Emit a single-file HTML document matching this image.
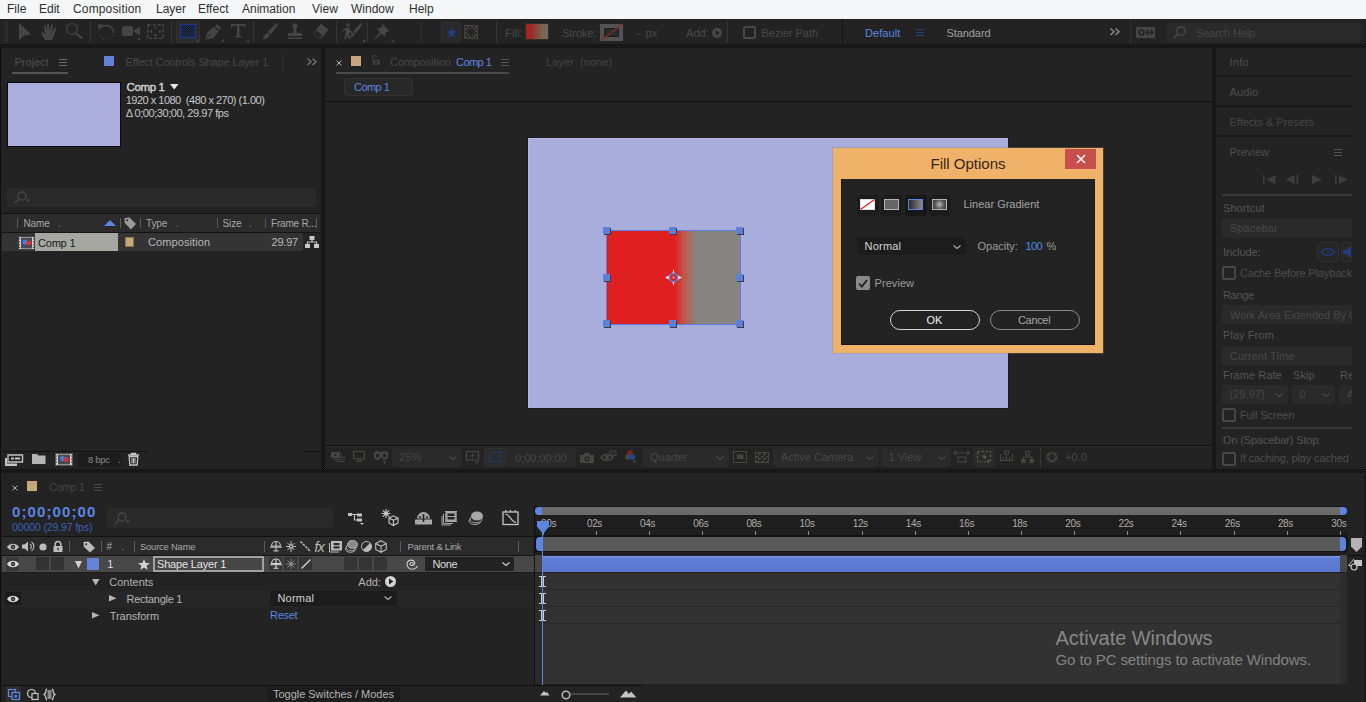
<!DOCTYPE html>
<html><head><meta charset="utf-8"><title>Adobe After Effects</title>
<style>
*{box-sizing:border-box;margin:0;padding:0}
html,body{width:1366px;height:702px;overflow:hidden;background:#232323;font-family:"Liberation Sans",sans-serif;font-size:11px;color:#8a8a8a}
.a{position:absolute}
.t{position:absolute;white-space:nowrap;line-height:14px}
svg{overflow:visible}
</style></head><body>
<!-- MENU BAR -->
<div class="a" style="left:0px;top:0px;width:1366px;height:19px;background:#f5f6f7;"></div>
<span class="t" style="left:7px;top:2.04px;font-size:12.01px;color:#2e2e2e;">File</span>
<span class="t" style="left:39px;top:2.04px;font-size:12.01px;color:#2e2e2e;">Edit</span>
<span class="t" style="left:73px;top:2.04px;font-size:12.01px;color:#2e2e2e;letter-spacing:0.15px;">Composition</span>
<span class="t" style="left:156px;top:2.04px;font-size:12.01px;color:#2e2e2e;">Layer</span>
<span class="t" style="left:198px;top:2.04px;font-size:12.01px;color:#2e2e2e;">Effect</span>
<span class="t" style="left:242px;top:2.04px;font-size:12.01px;color:#2e2e2e;">Animation</span>
<span class="t" style="left:312px;top:2.04px;font-size:12.01px;color:#2e2e2e;">View</span>
<span class="t" style="left:351px;top:2.04px;font-size:12.01px;color:#2e2e2e;">Window</span>
<span class="t" style="left:409px;top:2.04px;font-size:12.01px;color:#2e2e2e;">Help</span>
<!-- TOOLBAR -->
<svg class="a" style="left:5px;top:22px;" width="4" height="19" viewBox="0 0 4 19"><rect x="0" y="0" width="3" height="1" fill="#333"/><rect x="0" y="2" width="3" height="1" fill="#333"/><rect x="0" y="4" width="3" height="1" fill="#333"/><rect x="0" y="6" width="3" height="1" fill="#333"/><rect x="0" y="8" width="3" height="1" fill="#333"/><rect x="0" y="10" width="3" height="1" fill="#333"/><rect x="0" y="12" width="3" height="1" fill="#333"/><rect x="0" y="14" width="3" height="1" fill="#333"/><rect x="0" y="16" width="3" height="1" fill="#333"/><rect x="0" y="18" width="3" height="1" fill="#333"/></svg>
<svg class="a" style="left:19px;top:23px;" width="13" height="18" viewBox="0 0 13 18"><path d="M0 0 L12 11.5 L5.3 12.4 L0 17 Z" fill="#454545"/></svg>
<svg class="a" style="left:41px;top:23px;" width="16" height="17" viewBox="0 0 16 17"><path d="M4 17 C2 13 0 11 0.5 9.5 C1.5 8.5 3 10 4 11 L3 3 C3 1.5 5 1.5 5 3 L6 8 L6 1.5 C6 0 8 0 8 1.5 L8.5 8 L10 2 C10.3 0.8 12 1 11.8 2.5 L11 9 L13.5 5 C14.2 4 15.5 4.8 15 6 C13.5 10 13 14 11 17 Z" fill="#454545"/></svg>
<svg class="a" style="left:66px;top:23px;" width="17" height="17" viewBox="0 0 17 17"><circle cx="6" cy="6" r="5.4" fill="none" stroke="#454545" stroke-width="1.2"/><path d="M10 10.3 L16 15.6" stroke="#454545" stroke-width="2"/></svg>
<div class="a" style="left:90px;top:21px;width:1px;height:21px;background:#363636;"></div>
<svg class="a" style="left:98px;top:23px;" width="17" height="17" viewBox="0 0 17 17"><path d="M3.5 4.5 A7.2 7.2 0 0 1 15.6 10" fill="none" stroke="#454545" stroke-width="1.5"/><path d="M0 1 L5.5 2 L1 7 Z" fill="#454545"/><path d="M14.5 12.5 A7.2 7.2 0 0 1 1.5 11" fill="none" stroke="#454545" stroke-width="1.2" stroke-dasharray="1.2 2"/></svg>
<svg class="a" style="left:122px;top:25px;" width="19" height="16" viewBox="0 0 19 16"><rect x="0" y="1" width="11" height="10" rx="2.5" fill="#454545"/><path d="M11 6 L18 1.5 L18 10.5 Z" fill="#454545"/><path d="M15 15 L18 15 L18 12 Z" fill="#454545"/></svg>
<svg class="a" style="left:147px;top:24px;" width="17" height="15" viewBox="0 0 17 15"><rect x="0.75" y="0.75" width="15.5" height="13.5" fill="none" stroke="#454545" stroke-width="1.5" stroke-dasharray="3 2"/><path d="M8.5 2 L10.5 4.5 L6.5 4.5 Z M8.5 13 L10.5 10.5 L6.5 10.5 Z M2.5 7.5 L5 5.5 L5 9.5 Z M14.5 7.5 L12 5.5 L12 9.5 Z" fill="#454545"/></svg>
<div class="a" style="left:171px;top:21px;width:1px;height:21px;background:#363636;"></div>
<div class="a" style="left:176px;top:21px;width:24px;height:22px;background:#2b2b2b;border-radius:3px;border:1px solid #303030"></div>
<div class="a" style="left:180px;top:24px;width:16px;height:14px;background:repeating-conic-gradient(#1a2c62 0 25%,#1b1b1d 0 50%) 0 0/2px 2px;border:1px solid #1c3a96"></div>
<svg class="a" style="left:196px;top:39px;" width="3" height="3" viewBox="0 0 3 3"><path d="M0 3 L3 3 L3 0 Z" fill="#454545"/></svg>
<svg class="a" style="left:205px;top:24px;" width="17" height="17" viewBox="0 0 17 17"><path d="M0 16 L2.5 8 L9 3 L13.5 7.5 L8.5 14 Z" fill="#454545"/><path d="M10 2 L12 0 L16 4 L14 6 Z" fill="#454545"/><path d="M0.5 15.5 L6 10" stroke="#232323" stroke-width="1"/></svg>
<svg class="a" style="left:221px;top:39px;" width="3" height="3" viewBox="0 0 3 3"><path d="M0 3 L3 3 L3 0 Z" fill="#454545"/></svg>
<svg class="a" style="left:231px;top:24px;" width="15" height="15" viewBox="0 0 15 15"><path d="M0 0 H14.5 V3.5 H13 V2 H8.5 V12 H10.5 V13.5 H4 V12 H6 V2 H1.5 V3.5 H0 Z" fill="#454545"/></svg>
<svg class="a" style="left:246px;top:39px;" width="3" height="3" viewBox="0 0 3 3"><path d="M0 3 L3 3 L3 0 Z" fill="#454545"/></svg>
<div class="a" style="left:253px;top:21px;width:1px;height:21px;background:#363636;"></div>
<svg class="a" style="left:262px;top:23px;" width="17" height="17" viewBox="0 0 17 17"><path d="M16 0 C17 1 12 8 8.5 11.5 L6 9 C9 5 15 -0.5 16 0 Z" fill="#454545"/><path d="M5.3 9.8 L7.8 12.2 C7 15 3 17 0 16 C2 15 2.5 11 5.3 9.8 Z" fill="#454545"/></svg>
<svg class="a" style="left:287px;top:23px;" width="16" height="17" viewBox="0 0 16 17"><circle cx="8" cy="3" r="2.6" fill="#454545"/><path d="M7 5 H9 L9.8 10 H15 V13 H1 V10 H6.2 Z" fill="#454545"/><rect x="1" y="14.5" width="14" height="1.4" fill="#454545"/></svg>
<svg class="a" style="left:312px;top:23px;" width="17" height="17" viewBox="0 0 17 17"><path d="M9 0.5 L16.5 7 L9.5 15 L7 16 L1 10.5 Z" fill="#454545"/><path d="M1.6 10.4 L4.4 7.2 L10 12.2 L7.2 15.4 Z" fill="#232323"/></svg>
<div class="a" style="left:336px;top:21px;width:1px;height:21px;background:#363636;"></div>
<svg class="a" style="left:342px;top:23px;" width="21" height="18" viewBox="0 0 21 18"><circle cx="6" cy="2" r="1.8" fill="#454545"/><path d="M3 5 L7 4.5 L8.5 8 L11 9 L10.5 10 L7.5 9.5 L7 12 L9 16 L7.7 16.5 L5 12.5 L3.5 16.5 L2 16 L4 9 L3.5 6.5 L1.5 9 L0.5 8.5 Z" fill="#454545"/><path d="M20 0 C21 1 16 8 13.5 10.5 L11.5 8.5 C14 5 19 -0.5 20 0 Z M11 9.5 L12.8 11.2 C12 13.5 9.5 14.5 8 14 C9.3 13 9.2 10.3 11 9.5 Z" fill="#454545"/></svg>
<svg class="a" style="left:362px;top:39px;" width="3" height="3" viewBox="0 0 3 3"><path d="M0 3 L3 3 L3 0 Z" fill="#454545"/></svg>
<div class="a" style="left:367px;top:21px;width:1px;height:21px;background:#363636;"></div>
<svg class="a" style="left:374px;top:23px;" width="16" height="17" viewBox="0 0 16 17"><path d="M8 0.5 L15.5 8 L13.5 8.5 L11 11 L11 14 L7.5 10.5 L1 16.5 L0.5 16 L6 9 L2.5 5.5 L5.5 5.5 L8 3 Z" fill="#454545"/></svg>
<svg class="a" style="left:391px;top:39px;" width="3" height="3" viewBox="0 0 3 3"><path d="M0 3 L3 3 L3 0 Z" fill="#454545"/></svg>
<div class="a" style="left:421px;top:21px;width:1px;height:21px;background:#303030;"></div>
<div class="a" style="left:441px;top:22px;width:20px;height:20px;background:#292929;border-radius:3px;border:1px solid #2f2f2f"></div>
<svg class="a" style="left:446px;top:26.5px;" width="11" height="10.5" viewBox="0 0 12 11.6"><path d="M6 0 L7.6 4.2 L12 4.4 L8.5 7.2 L9.7 11.6 L6 9.1 L2.3 11.6 L3.5 7.2 L0 4.4 L4.4 4.2 Z" fill="#223c86"/></svg>
<div class="a" style="left:464px;top:25px;width:14px;height:14px;background:repeating-conic-gradient(#45423c 0 25%,#262626 0 50%) 0 0/4px 4px;border:1px solid #45423c"></div>
<div class="a" style="left:468px;top:29px;width:6px;height:6px;background:#242424;transform:rotate(45deg)"></div>
<div class="a" style="left:496px;top:22px;width:1px;height:20px;background:#363636;"></div>
<span class="t" style="left:505px;top:26.39px;font-size:11px;color:#4a4a4a;letter-spacing:0.16999999999999998px;">Fill:</span>
<div class="a" style="left:525px;top:23px;width:24px;height:17px;background:linear-gradient(90deg,#a42222 0%,#96302a 30%,#865040 55%,#7c6650 75%,#736a60 100%);border:1px solid #2e2e2e"></div>
<span class="t" style="left:562px;top:26.39px;font-size:11px;color:#4a4a4a;letter-spacing:-0.030000000000000027px;">Stroke:</span>
<div class="a" style="left:600px;top:24px;width:23px;height:17px;background:#2a2a2a;border:4px solid #525252;box-shadow:inset 0 0 0 1px #1e1e1e"></div>
<svg class="a" style="left:600px;top:24px;" width="23" height="17" viewBox="0 0 23 17"><path d="M0 17 L23 0" stroke="#8c2c26" stroke-width="1.3"/></svg>
<span class="t" style="left:636.5px;top:26.39px;font-size:11px;color:#4a4a4a;letter-spacing:0.47px;">-</span>
<span class="t" style="left:645.5px;top:26.39px;font-size:11px;color:#4a4a4a;letter-spacing:0.06999999999999995px;">px</span>
<span class="t" style="left:686px;top:26.39px;font-size:11px;color:#4a4a4a;letter-spacing:0.06999999999999995px;">Add:</span>
<svg class="a" style="left:712px;top:28px;" width="10" height="10" viewBox="0 0 10 10"><circle cx="5" cy="5" r="5" fill="#484848"/><path d="M3.6 2.2 L7.8 5 L3.6 7.8 Z" fill="#232323"/></svg>
<div class="a" style="left:727px;top:22px;width:1px;height:20px;background:#363636;"></div>
<div class="a" style="left:743px;top:26px;width:13px;height:13px;background:transparent;border:2px solid #474747;border-radius:2px"></div>
<span class="t" style="left:761.5px;top:26.39px;font-size:11px;color:#4a4a4a;letter-spacing:-0.030000000000000027px;">Bezier Path</span>
<div class="a" style="left:842px;top:19px;width:1px;height:25px;background:#141414;"></div>
<span class="t" style="left:865px;top:26.39px;font-size:11px;color:#5b85e0;letter-spacing:0.06999999999999995px;">Default</span>
<svg class="a" style="left:916px;top:29px;" width="9" height="8" viewBox="0 0 9 8"><path d="M0 0.5 H8 M0 3.5 H8 M0 6.5 H8" stroke="#27417d" stroke-width="1"/></svg>
<span class="t" style="left:946.5px;top:26.39px;font-size:11px;color:#a0a0a0;letter-spacing:-0.08000000000000007px;">Standard</span>
<svg class="a" style="left:1110px;top:28px;" width="11" height="8" viewBox="0 0 11 8"><path d="M0.5 0.5 L4 3.8 L0.5 7 M5.5 0.5 L9 3.8 L5.5 7" fill="none" stroke="#8a8a8a" stroke-width="1.5"/></svg>
<div class="a" style="left:1130px;top:20px;width:1px;height:24px;background:#303030;"></div>
<svg class="a" style="left:1136px;top:27px;" width="19" height="11" viewBox="0 0 19 11"><rect x="0" y="0" width="19" height="11" fill="#454545"/><circle cx="5.5" cy="5.5" r="2.4" fill="none" stroke="#232323" stroke-width="1.5"/><path d="M10 5.5 H17 M14.5 3 L17 5.5 L14.5 8 M12.5 3 L10 5.5 L12.5 8" fill="none" stroke="#232323" stroke-width="1.3"/></svg>
<div class="a" style="left:1167px;top:23px;width:194px;height:19px;background:#2a2a2a;border-radius:3px"></div>
<svg class="a" style="left:1173px;top:26px;" width="13" height="13" viewBox="0 0 13 13"><circle cx="8" cy="5" r="4.2" fill="none" stroke="#4a4a4a" stroke-width="1.3"/><path d="M5 8 L0.8 12.2" stroke="#4a4a4a" stroke-width="1.6"/></svg>
<span class="t" style="left:1196px;top:26.39px;font-size:11px;color:#474747;letter-spacing:-0.13px;">Search Help</span>
<!-- DIVIDERS -->
<div class="a" style="left:0px;top:44px;width:1366px;height:4px;background:repeating-conic-gradient(#0c0c0c 0 25%,#232323 0 50%) 0 0/2px 2px"></div>
<div class="a" style="left:321px;top:48px;width:4px;height:421px;background:repeating-conic-gradient(#0c0c0c 0 25%,#232323 0 50%) 0 0/2px 2px"></div>
<div class="a" style="left:1212px;top:48px;width:4px;height:421px;background:repeating-conic-gradient(#0c0c0c 0 25%,#232323 0 50%) 0 0/2px 2px"></div>
<div class="a" style="left:0px;top:469px;width:1366px;height:4px;background:repeating-conic-gradient(#0c0c0c 0 25%,#232323 0 50%) 0 0/2px 2px"></div>
<div class="a" style="left:0px;top:48px;width:1px;height:654px;background:#0e0e0e;"></div>
<!-- PROJECT PANEL -->
<span class="t" style="left:14.5px;top:54.89px;font-size:11px;color:#4f4f4f;letter-spacing:-0.030000000000000027px;">Project</span>
<svg class="a" style="left:59px;top:59px;" width="9" height="8" viewBox="0 0 9 8"><path d="M0 0.5 H8 M0 3.5 H8 M0 6.5 H8" stroke="#6a6a6a" stroke-width="1"/></svg>
<div class="a" style="left:12px;top:72px;width:56px;height:2px;background:#565656;"></div>
<div class="a" style="left:104px;top:56px;width:10px;height:10px;background:#6380d8;"></div>
<span class="t" style="left:125.5px;top:54.89px;font-size:11px;color:#474747;letter-spacing:-0.13px;">Effect Controls Shape Layer 1</span>
<div class="a" style="left:282px;top:52px;width:1px;height:20px;background:#2e2e2e;"></div>
<svg class="a" style="left:307px;top:58px;" width="11" height="8" viewBox="0 0 11 8"><path d="M0.5 0.5 L4 3.8 L0.5 7 M5.5 0.5 L9 3.8 L5.5 7" fill="none" stroke="#6e6e6e" stroke-width="1.5"/></svg>
<div class="a" style="left:7px;top:82px;width:114px;height:65px;background:#abaedd;border:1px solid #0a0a0a"></div>
<span class="t" style="left:126.5px;top:80.22px;font-size:11.5px;color:#d4d4d4;letter-spacing:-0.35px;-webkit-text-stroke:0.4px #d4d4d4;">Comp 1</span>
<svg class="a" style="left:170px;top:84px;" width="9" height="6" viewBox="0 0 9 6"><path d="M0 0 L8.5 0 L4.25 5.5 Z" fill="#e8e8e8"/></svg>
<span class="t" style="left:125.7px;top:93.49px;font-size:11px;color:#c8c8c8;letter-spacing:-0.5px;">1920 x 1080&nbsp; (480 x 270) (1.00)</span>
<span class="t" style="left:125.7px;top:106.49px;font-size:11px;color:#c8c8c8;letter-spacing:-0.45px;">&#916; 0;00;30;00, 29.97 fps</span>
<div class="a" style="left:7px;top:188px;width:309px;height:19px;background:#2a2a2a;border-radius:3px"></div>
<svg class="a" style="left:14px;top:191px;" width="18" height="14" viewBox="0 0 18 14"><circle cx="8" cy="5" r="4" fill="none" stroke="#484848" stroke-width="1.3"/><path d="M5 8 L1 12" stroke="#484848" stroke-width="1.5"/><path d="M11.5 8.5 L16 8.5 L13.75 11 Z" fill="#484848"/></svg>
<div class="a" style="left:2px;top:213px;width:318px;height:1px;background:#111;"></div>
<div class="a" style="left:2px;top:214px;width:318px;height:18px;background:#2b2b2b;"></div>
<div class="a" style="left:2px;top:232px;width:318px;height:1px;background:#151515;"></div>
<div class="a" style="left:17px;top:218px;width:1px;height:10px;background:#5a5a5a;"></div>
<div class="a" style="left:120px;top:218px;width:1px;height:10px;background:#5a5a5a;"></div>
<div class="a" style="left:140px;top:218px;width:1px;height:10px;background:#5a5a5a;"></div>
<div class="a" style="left:217px;top:218px;width:1px;height:10px;background:#5a5a5a;"></div>
<div class="a" style="left:265px;top:218px;width:1px;height:10px;background:#5a5a5a;"></div>
<div class="a" style="left:316px;top:218px;width:1px;height:10px;background:#5a5a5a;"></div>
<span class="t" style="left:23.5px;top:216.73px;font-size:10px;color:#a8a8a8;letter-spacing:-0.1px;">Name</span>
<span class="t" style="left:58px;top:216.73px;font-size:10px;color:#5b85e0;">.</span>
<svg class="a" style="left:104px;top:220px;" width="13" height="6" viewBox="0 0 13 6"><path d="M0 6 L6 0 L12 6 Z" fill="#5b85e0"/></svg>
<svg class="a" style="left:124px;top:217px;" width="13" height="13" viewBox="0 0 13 13"><path d="M0.5 1 L5.5 0.5 L12 7 L7 12.5 L0.8 6 Z" fill="#9a9a9a"/><circle cx="3.2" cy="3.2" r="1" fill="#2b2b2b"/></svg>
<span class="t" style="left:146px;top:216.73px;font-size:10px;color:#a8a8a8;letter-spacing:-0.1px;">Type</span>
<span class="t" style="left:176px;top:216.73px;font-size:10px;color:#5b85e0;">.</span>
<span class="t" style="left:222.5px;top:216.73px;font-size:10px;color:#a8a8a8;letter-spacing:-0.1px;">Size</span>
<span class="t" style="left:249px;top:216.73px;font-size:10px;color:#5b85e0;">.</span>
<span class="t" style="left:271px;top:216.73px;font-size:10px;color:#a8a8a8;letter-spacing:-0.2px;">Frame R...</span>
<div class="a" style="left:2px;top:233px;width:301px;height:18px;background:#343434;"></div>
<div class="a" style="left:35px;top:233px;width:83px;height:18px;background:#a5a7a0;"></div>
<svg class="a" style="left:18px;top:236px;" width="17" height="14" viewBox="0 0 17 14"><rect x="0.5" y="0.5" width="16" height="13" fill="#cfcfcf" stroke="#444" stroke-width="1"/><rect x="3" y="1.5" width="11" height="11" fill="#4a4a55"/><circle cx="7" cy="6" r="2.6" fill="#4a7ad8"/><rect x="8.5" y="5" width="4.5" height="4" fill="#e03030"/><path d="M1.5 2.5 v1 M1.5 5.5 v1 M1.5 8.5 v1 M1.5 11 v1 M15.5 2.5 v1 M15.5 5.5 v1 M15.5 8.5 v1 M15.5 11 v1" stroke="#333" stroke-width="1"/></svg>
<span class="t" style="left:38px;top:235.59px;font-size:11.01px;color:#1a1a1a;letter-spacing:-0.2px;">Comp 1</span>
<div class="a" style="left:125px;top:237px;width:9px;height:10px;background:#c9a77c;border:1px solid #8d7552"></div>
<span class="t" style="left:148px;top:235.49px;font-size:11px;color:#b8b8b8;letter-spacing:0.1px;">Composition</span>
<span class="t" style="left:271.5px;top:234.69px;font-size:11px;color:#b8b8b8;letter-spacing:-0.2px;">29.97</span>
<svg class="a" style="left:305px;top:236px;" width="14" height="12" viewBox="0 0 14 12"><rect x="4.5" y="0" width="5" height="4" fill="#c8c8c8"/><rect x="0" y="8" width="5" height="4" fill="#c8c8c8"/><rect x="9" y="8" width="5" height="4" fill="#c8c8c8"/><path d="M7 4 V6 M2.5 8 V6 H11.5 V8" fill="none" stroke="#c8c8c8" stroke-width="1.2"/></svg>
<div class="a" style="left:2px;top:451px;width:145px;height:1px;background:#111;"></div>
<div class="a" style="left:303px;top:451px;width:18px;height:1px;background:#111;"></div>
<svg class="a" style="left:5px;top:454px;" width="18" height="12" viewBox="0 0 18 12"><path d="M3 1 H17.5 V8 H3 Z" fill="none" stroke="#c4c4c4" stroke-width="1.4"/><rect x="6" y="3.5" width="3" height="2" fill="#c4c4c4"/><rect x="10" y="3.5" width="5" height="2" fill="#c4c4c4"/><path d="M0 4 H2 V9.5 H12 V12 H0 Z" fill="#c4c4c4"/></svg>
<svg class="a" style="left:32px;top:454px;" width="14" height="10" viewBox="0 0 14 10"><path d="M0 0 H5 L6.5 1.5 H13.5 V10 H0 Z" fill="#b4b4b4"/></svg>
<svg class="a" style="left:55px;top:453px;" width="18" height="13" viewBox="0 0 18 13"><rect x="0.5" y="0.5" width="17" height="12" fill="#d0d0d0" stroke="#555" stroke-width="1"/><rect x="3" y="1.5" width="12" height="10" fill="#4a4a55"/><circle cx="7.5" cy="5.5" r="2.5" fill="#4a7ad8"/><rect x="9" y="4.5" width="4.5" height="4" fill="#e03030"/><path d="M1.5 2.5 v1 M1.5 5.5 v1 M1.5 8.5 v1 M16.5 2.5 v1 M16.5 5.5 v1 M16.5 8.5 v1" stroke="#333" stroke-width="1"/></svg>
<div class="a" style="left:78px;top:453px;width:44px;height:14px;background:repeating-conic-gradient(#161616 0 25%,#222 0 50%) 0 0/2px 2px;border-radius:3px"></div>
<span class="t" style="left:88px;top:452.91px;font-size:9.5px;color:#8a8a8a;letter-spacing:-0.3px;">8 bpc</span>
<span class="t" style="left:118px;top:452.84px;font-size:10px;color:#5b85e0;">.</span>
<svg class="a" style="left:128px;top:453px;" width="11" height="12" viewBox="0 0 11 12"><path d="M0 2 H11 M3.5 2 V0.5 H7.5 V2" fill="none" stroke="#c4c4c4" stroke-width="1.3"/><path d="M1.2 3.5 H9.8 L9.2 12 H1.8 Z" fill="none" stroke="#c4c4c4" stroke-width="1.3"/><path d="M4 5 V10.5 M5.5 5 V10.5 M7 5 V10.5" stroke="#c4c4c4" stroke-width="1"/></svg>
<!-- COMPOSITION PANEL -->
<svg class="a" style="left:336px;top:60px;" width="6" height="6" viewBox="0 0 6 6"><path d="M0.5 0.5 L5.5 5.5 M5.5 0.5 L0.5 5.5" stroke="#b4b4b4" stroke-width="1"/></svg>
<div class="a" style="left:351px;top:56px;width:10px;height:10px;background:#c9a77c;"></div>
<svg class="a" style="left:371px;top:55px;" width="9" height="10" viewBox="0 0 9 10"><path d="M1.5 4.5 V2.5 A2 2 0 0 1 5.5 2.2" fill="none" stroke="#3c3c3c" stroke-width="1.3"/><rect x="1.5" y="4.5" width="7.5" height="5.5" fill="#3c3c3c"/><rect x="4.5" y="6" width="1.5" height="2.5" fill="#232323"/></svg>
<span class="t" style="left:390px;top:54.89px;font-size:11px;color:#484848;">Composition</span>
<span class="t" style="left:456px;top:54.89px;font-size:11.01px;color:#5b85e0;letter-spacing:-0.55px;">Comp 1</span>
<svg class="a" style="left:500.5px;top:59px;" width="9" height="8" viewBox="0 0 9 8"><path d="M0 0.5 H8 M0 3.5 H8 M0 6.5 H8" stroke="#555" stroke-width="1"/></svg>
<div class="a" style="left:336px;top:72px;width:173px;height:2px;background:#4a4a4a;"></div>
<span class="t" style="left:546px;top:54.89px;font-size:11px;color:#444;letter-spacing:0.06999999999999995px;">Layer&nbsp; (none)</span>
<div class="a" style="left:344px;top:78px;width:69px;height:18px;background:#282828;border:1px solid #323232;border-radius:3px"></div>
<span class="t" style="left:354px;top:80.49px;font-size:11.01px;color:#5b85e0;letter-spacing:-0.55px;">Comp 1</span>
<div class="a" style="left:325px;top:101px;width:887px;height:1px;background:#0f0f0f;"></div>
<div class="a" style="left:527px;top:137px;width:482px;height:272px;background:#1a1a18;"></div>
<div class="a" style="left:528px;top:138px;width:480px;height:270px;background:#a9addc;box-shadow:inset 1px 1px 0 #b4b8ec"></div>
<div class="a" style="left:606px;top:230px;width:135px;height:95px;background:#878381;background:linear-gradient(90deg,#e02020 0%,#e02020 51%,#c0584c 58%,#a07068 63%,#878381 67%,#878381 100%);border:1px solid #5a7edc"></div>
<div class="a" style="left:604px;top:228px;width:7px;height:7px;background:#3a3a44;"></div>
<div class="a" style="left:603px;top:227px;width:7px;height:7px;background:#5c7fd8;"></div>
<div class="a" style="left:670px;top:228px;width:7px;height:7px;background:#3a3a44;"></div>
<div class="a" style="left:669px;top:227px;width:7px;height:7px;background:#5c7fd8;"></div>
<div class="a" style="left:737px;top:228px;width:7px;height:7px;background:#3a3a44;"></div>
<div class="a" style="left:736px;top:227px;width:7px;height:7px;background:#5c7fd8;"></div>
<div class="a" style="left:604px;top:275px;width:7px;height:7px;background:#3a3a44;"></div>
<div class="a" style="left:603px;top:274px;width:7px;height:7px;background:#5c7fd8;"></div>
<div class="a" style="left:737px;top:275px;width:7px;height:7px;background:#3a3a44;"></div>
<div class="a" style="left:736px;top:274px;width:7px;height:7px;background:#5c7fd8;"></div>
<div class="a" style="left:604px;top:321px;width:7px;height:7px;background:#3a3a44;"></div>
<div class="a" style="left:603px;top:320px;width:7px;height:7px;background:#5c7fd8;"></div>
<div class="a" style="left:670px;top:321px;width:7px;height:7px;background:#3a3a44;"></div>
<div class="a" style="left:669px;top:320px;width:7px;height:7px;background:#5c7fd8;"></div>
<div class="a" style="left:737px;top:321px;width:7px;height:7px;background:#3a3a44;"></div>
<div class="a" style="left:736px;top:320px;width:7px;height:7px;background:#5c7fd8;"></div>
<svg class="a" style="left:664.5px;top:268.8px;" width="17" height="17" viewBox="0 0 17 17"><path d="M8.5 0 L9.8 5 L17 8.5 L9.8 12 L8.5 17 L7.2 12 L0 8.5 L7.2 5 Z" fill="#e8e8e8"/><circle cx="8.5" cy="8.5" r="4" fill="#e02020" stroke="#5a7edc" stroke-width="1.6"/><circle cx="8.5" cy="8.5" r="1.2" fill="#d88"/></svg>
<div class="a" style="left:325px;top:445px;width:887px;height:1px;background:#0f0f0f;"></div>
<div class="a" style="left:325px;top:446px;width:887px;height:1px;background:#2c2c2c;"></div>
<svg class="a" style="left:331px;top:452px;" width="14" height="10" viewBox="0 0 14 10"><rect x="0" y="0" width="9" height="6" fill="#454541"/><path d="M3.5 1.5 L6 3 L3.5 4.5 Z" fill="#232323"/><path d="M10.5 2 V7.5 H2.5 M13 4 V9.5 H5" fill="none" stroke="#454541" stroke-width="1"/></svg>
<svg class="a" style="left:353px;top:451px;" width="12" height="11" viewBox="0 0 12 11"><rect x="0.5" y="0.5" width="11" height="7.5" fill="none" stroke="#454541" stroke-width="1.2"/><path d="M6 8 V10 M3 10.3 H9" stroke="#454541" stroke-width="1.2"/></svg>
<svg class="a" style="left:373px;top:451px;" width="16" height="13" viewBox="0 0 16 13"><path d="M1 1 C4 -0.3 6 0.5 8 1.5 C10 0.5 12 -0.3 15 1 C16 4 15 8 12 9 C10 9.3 9 7.5 8 6 C7 7.5 6 9.3 4 9 C1 8 0 4 1 1 Z" fill="#454541"/><ellipse cx="4.6" cy="4.5" rx="1.7" ry="2" fill="#232323"/><ellipse cx="11.4" cy="4.5" rx="1.7" ry="2" fill="#232323"/><path d="M9.5 10.5 L14 10.5 L11.75 13 Z" fill="#454541"/></svg>
<div class="a" style="left:392px;top:448px;width:70px;height:19px;background:#2a2a2a;border-radius:3px"></div>
<span class="t" style="left:399px;top:450.19px;font-size:11px;color:#474747;letter-spacing:0.16999999999999998px;">25%</span>
<svg class="a" style="left:448.5px;top:456px;" width="8" height="4" viewBox="0 0 8 4"><path d="M0.5 0.5 L4 3.5 L7.5 0.5" fill="none" stroke="#4a4a4a" stroke-width="1.2"/></svg>
<svg class="a" style="left:465px;top:451px;" width="15" height="13" viewBox="0 0 15 13"><rect x="1.5" y="0.5" width="12" height="8.5" fill="none" stroke="#454541" stroke-width="1.2"/><path d="M7.5 2.5 V7 M5 4.75 H10 M0 4.75 H3 M12 4.75 H15 M7.5 0 V1.5 M7.5 8.5 V10" stroke="#454541" stroke-width="1"/><path d="M9.5 10.5 L14 10.5 L11.75 13 Z" fill="#454541"/></svg>
<div class="a" style="left:484px;top:448px;width:22px;height:19px;background:#2b2b2b;border-radius:3px;border:1px solid #303030"></div>
<svg class="a" style="left:488px;top:451px;" width="14" height="12" viewBox="0 0 14 12"><path d="M1.5 6 L4.5 1.5 L12.5 1 L12 10.5 L1.5 10.5 Z" fill="none" stroke="#1f3878" stroke-width="1.1"/></svg>
<div class="a" style="left:506px;top:448px;width:70px;height:19px;background:#292929;"></div>
<span class="t" style="left:515.3px;top:450.69px;font-size:11px;color:#464646;letter-spacing:-0.08000000000000007px;">0;00;00;00</span>
<svg class="a" style="left:580px;top:453px;" width="14" height="10" viewBox="0 0 14 10"><path d="M0 2 H3.5 L4.5 0 H9.5 L10.5 2 H14 V10 H0 Z" fill="#454541"/><circle cx="7" cy="5.8" r="2.6" fill="#232323"/><circle cx="7" cy="5.8" r="1.4" fill="#454541"/></svg>
<svg class="a" style="left:601px;top:450px;" width="15" height="12" viewBox="0 0 15 12"><path d="M0 7.5 C3 3.5 9 3.5 12 7.5 C9 11.5 3 11.5 0 7.5 Z" fill="none" stroke="#454541" stroke-width="1.4"/><circle cx="6" cy="7.5" r="2" fill="#454541"/><rect x="9" y="1" width="6" height="4.5" rx="1" fill="none" stroke="#454541" stroke-width="1.2"/><circle cx="12" cy="3.2" r="0.9" fill="#454541"/></svg>
<svg class="a" style="left:625px;top:450px;" width="12" height="13" viewBox="0 0 12 13"><circle cx="5" cy="3" r="2.8" fill="#7c2424"/><circle cx="3" cy="7" r="2.8" fill="#484848"/><circle cx="7.5" cy="7" r="2.8" fill="#1d4598"/><path d="M7 10.5 L11.5 10.5 L9.25 13 Z" fill="#454541"/></svg>
<div class="a" style="left:642px;top:448px;width:87px;height:19px;background:#2a2a2a;border-radius:3px"></div>
<span class="t" style="left:650px;top:450.49px;font-size:11px;color:#474747;">Quarter</span>
<svg class="a" style="left:716px;top:456px;" width="8" height="4" viewBox="0 0 8 4"><path d="M0.5 0.5 L4 3.5 L7.5 0.5" fill="none" stroke="#4a4a4a" stroke-width="1.2"/></svg>
<svg class="a" style="left:733px;top:451px;" width="14" height="12" viewBox="0 0 14 12"><rect x="0.5" y="0.5" width="13" height="11" fill="none" stroke="#454541" stroke-width="1"/><rect x="4" y="3.5" width="6.5" height="4.5" fill="#454541"/></svg>
<div class="a" style="left:755px;top:452px;width:14px;height:11px;background:repeating-conic-gradient(#403e3a 0 25%,#232323 0 50%) 0 0/5px 5px;border:1px solid #454541"></div>
<div class="a" style="left:773px;top:448px;width:106px;height:19px;background:#2a2a2a;border-radius:3px"></div>
<span class="t" style="left:781px;top:450.49px;font-size:11px;color:#474747;">Active Camera</span>
<svg class="a" style="left:865.5px;top:456px;" width="8" height="4" viewBox="0 0 8 4"><path d="M0.5 0.5 L4 3.5 L7.5 0.5" fill="none" stroke="#4a4a4a" stroke-width="1.2"/></svg>
<div class="a" style="left:881px;top:448px;width:70px;height:19px;background:#2a2a2a;border-radius:3px"></div>
<span class="t" style="left:888.5px;top:450.49px;font-size:11px;color:#474747;">1 View</span>
<svg class="a" style="left:937.5px;top:456px;" width="8" height="4" viewBox="0 0 8 4"><path d="M0.5 0.5 L4 3.5 L7.5 0.5" fill="none" stroke="#4a4a4a" stroke-width="1.2"/></svg>
<svg class="a" style="left:954px;top:451px;" width="16" height="12" viewBox="0 0 16 12"><path d="M0 2 H15.5 M2.5 0 L0 2 L2.5 4 M13 0 L15.5 2 L13 4" fill="none" stroke="#454541" stroke-width="1.1"/><rect x="4" y="6" width="8" height="5" fill="none" stroke="#454541" stroke-width="1.1"/></svg>
<div class="a" style="left:973px;top:448px;width:22px;height:19px;background:#2a2a2a;border-radius:3px"></div>
<svg class="a" style="left:977px;top:451px;" width="14" height="12" viewBox="0 0 14 12"><rect x="0.5" y="0.5" width="13" height="10.5" fill="none" stroke="#5a5a55" stroke-width="1.1" stroke-dasharray="2.5 1.5"/><path d="M8 2 L5 6.5 H7.5 L6 10 L10 5 H7.5 Z" fill="#5a5a55"/><path d="M9.5 9 L13 9 L11.25 11.5 Z" fill="#5a5a55"/></svg>
<svg class="a" style="left:1000px;top:451px;" width="13" height="10" viewBox="0 0 13 10"><path d="M0.5 3 V9.5 H12.5 V3 M6.5 3 V9.5" fill="none" stroke="#454541" stroke-width="1.1"/><rect x="4.5" y="0" width="4" height="3" fill="none" stroke="#454541" stroke-width="1"/><path d="M3.5 6 V9 M9.5 6 V9" stroke="#454541" stroke-width="1"/></svg>
<svg class="a" style="left:1021px;top:451px;" width="13" height="12" viewBox="0 0 13 12"><rect x="4.5" y="0.5" width="4" height="3.5" fill="none" stroke="#454541" stroke-width="1.1"/><rect x="0" y="8" width="4.5" height="4" fill="#454541"/><rect x="8.5" y="8" width="4.5" height="4" fill="#454541"/><path d="M6.5 4 V6 M2.2 8 V6 H10.8 V8" fill="none" stroke="#454541" stroke-width="1.1"/></svg>
<div class="a" style="left:1040px;top:448px;width:1px;height:19px;background:#383838;"></div>
<svg class="a" style="left:1046px;top:451px;" width="12" height="12" viewBox="0 0 12 12"><circle cx="6" cy="6" r="5.6" fill="#454541"/><path d="M6 3 L8.6 4.5 L8.6 7.5 L6 9 L3.4 7.5 L3.4 4.5 Z" fill="#232323"/><path d="M6 0.4 L8.6 4.5 M11.3 4 L8.6 7.5 M9.5 10.5 L6 9 M3 11 L3.4 7.5 M0.5 6.5 L3.4 4.5 M2.5 1.5 L6 3" stroke="#232323" stroke-width="0.9"/></svg>
<span class="t" style="left:1065px;top:450.49px;font-size:11px;color:#474747;letter-spacing:0.16999999999999998px;">+0.0</span>
<!-- RIGHT PANELS -->
<div class="a" style="left:1216px;top:48px;width:136px;height:421px;overflow:hidden">
<span class="t" style="left:13.5px;top:6.89px;font-size:11px;color:#4d4d4d;letter-spacing:0.26999999999999996px;">Info</span>
<span class="t" style="left:13.5px;top:36.69px;font-size:11px;color:#4d4d4d;letter-spacing:0.16999999999999998px;">Audio</span>
<span class="t" style="left:13.5px;top:66.69px;font-size:11px;color:#474747;">Effects &amp; Presets</span>
<span class="t" style="left:13.5px;top:96.79px;font-size:11px;color:#4d4d4d;letter-spacing:0.06999999999999995px;">Preview</span>
<div class="a" style="left:1px;top:27px;width:135px;height:2px;background:repeating-conic-gradient(#0c0c0c 0 25%,#232323 0 50%) 0 0/2px 2px"></div>
<div class="a" style="left:1px;top:57px;width:135px;height:2px;background:repeating-conic-gradient(#0c0c0c 0 25%,#232323 0 50%) 0 0/2px 2px"></div>
<div class="a" style="left:1px;top:87px;width:135px;height:2px;background:repeating-conic-gradient(#0c0c0c 0 25%,#232323 0 50%) 0 0/2px 2px"></div>
<svg class="a" style="left:118px;top:101px;" width="9" height="8" viewBox="0 0 9 8"><path d="M0 0.5 H8 M0 3.5 H8 M0 6.5 H8" stroke="#555" stroke-width="1"/></svg>
<svg class="a" style="left:47px;top:127px;" width="13" height="9" viewBox="0 0 13 9"><rect x="0" y="0" width="1.6" height="9" fill="#3e3e3e"/><path d="M12.5 0 V9 L3 4.5 Z" fill="#3e3e3e"/></svg>
<svg class="a" style="left:70px;top:127px;" width="13" height="9" viewBox="0 0 13 9"><path d="M8.5 0 V9 L0 4.5 Z" fill="#3e3e3e"/><rect x="10.5" y="0" width="1.6" height="9" fill="#3e3e3e"/></svg>
<svg class="a" style="left:96px;top:127px;" width="10" height="9" viewBox="0 0 10 9"><path d="M0 0 V9 L10 4.5 Z" fill="#3e3e3e"/></svg>
<svg class="a" style="left:119px;top:127px;" width="13" height="9" viewBox="0 0 13 9"><rect x="0" y="0" width="1.6" height="9" fill="#3e3e3e"/><path d="M4 0 V9 L12.5 4.5 Z" fill="#3e3e3e"/></svg>
<div class="a" style="left:6px;top:146px;width:130px;height:2px;background:#383838;"></div>
<span class="t" style="left:7px;top:152.99px;font-size:11px;color:#555;letter-spacing:0.06999999999999995px;">Shortcut</span>
<div class="a" style="left:6px;top:170.5px;width:140px;height:19.5px;background:#2a2a2a;border-radius:3px"></div>
<span class="t" style="left:14px;top:172.99px;font-size:11px;color:#484848;letter-spacing:0.06999999999999995px;">Spacebar</span>
<span class="t" style="left:7px;top:196.89px;font-size:11px;color:#555;letter-spacing:-0.13px;">Include:</span>
<div class="a" style="left:101px;top:194px;width:22px;height:20px;background:#272727;border:1px solid #303030;border-radius:3px"></div>
<svg class="a" style="left:105px;top:199px;" width="14" height="10" viewBox="0 0 14 10"><path d="M0.5 5 C3.5 0.5 10.5 0.5 13.5 5 C10.5 9.5 3.5 9.5 0.5 5 Z" fill="none" stroke="#213a80" stroke-width="1.4"/><circle cx="8.5" cy="4.5" r="1" fill="#213a80"/></svg>
<div class="a" style="left:125px;top:194px;width:22px;height:20px;background:#272727;border:1px solid #303030;border-radius:3px"></div>
<svg class="a" style="left:127px;top:198px;" width="10" height="12" viewBox="0 0 10 12"><path d="M0 4 H3 L8 0 V12 L3 8 H0 Z" fill="#213a80"/></svg>
<div class="a" style="left:6px;top:218px;width:14px;height:14px;background:transparent;border:2px solid #474747;border-radius:2px"></div>
<span class="t" style="left:24px;top:218.19px;font-size:11px;color:#4d4d4d;letter-spacing:-0.15000000000000002px;">Cache Before Playback</span>
<span class="t" style="left:7px;top:239.79px;font-size:11px;color:#555;letter-spacing:-0.33000000000000007px;">Range</span>
<div class="a" style="left:6px;top:257px;width:140px;height:19px;background:#2a2a2a;border-radius:3px"></div>
<span class="t" style="left:14px;top:259.89px;font-size:11px;color:#484848;letter-spacing:-0.030000000000000027px;">Work Area Extended By Current Time</span>
<span class="t" style="left:7px;top:279.89px;font-size:11px;color:#555;letter-spacing:0.06999999999999995px;">Play From</span>
<div class="a" style="left:6px;top:298px;width:140px;height:19px;background:#2a2a2a;border-radius:3px"></div>
<span class="t" style="left:14px;top:300.99px;font-size:11px;color:#484848;letter-spacing:0.06999999999999995px;">Current Time</span>
<span class="t" style="left:7px;top:320.19px;font-size:11px;color:#555;letter-spacing:0.06999999999999995px;">Frame Rate</span>
<span class="t" style="left:77px;top:320.19px;font-size:11px;color:#555;letter-spacing:0.06999999999999995px;">Skip</span>
<span class="t" style="left:124px;top:320.19px;font-size:11px;color:#555;letter-spacing:0.06999999999999995px;">Resolution</span>
<div class="a" style="left:6px;top:337px;width:66px;height:19px;background:#2a2a2a;border-radius:3px"></div>
<span class="t" style="left:13.5px;top:339.39px;font-size:11px;color:#484848;letter-spacing:0.06999999999999995px;">(29.97)</span>
<svg class="a" style="left:58.5px;top:345px;" width="8" height="4" viewBox="0 0 8 4"><path d="M0.5 0.5 L4 3.5 L7.5 0.5" fill="none" stroke="#4a4a4a" stroke-width="1.2"/></svg>
<div class="a" style="left:76px;top:337px;width:43px;height:19px;background:#2a2a2a;border-radius:3px"></div>
<span class="t" style="left:83.5px;top:339.39px;font-size:11px;color:#484848;letter-spacing:0.06999999999999995px;">0</span>
<svg class="a" style="left:106px;top:345px;" width="8" height="4" viewBox="0 0 8 4"><path d="M0.5 0.5 L4 3.5 L7.5 0.5" fill="none" stroke="#4a4a4a" stroke-width="1.2"/></svg>
<div class="a" style="left:123px;top:337px;width:40px;height:19px;background:#2a2a2a;border-radius:3px"></div>
<span class="t" style="left:131px;top:339.39px;font-size:11px;color:#484848;letter-spacing:0.06999999999999995px;">Auto</span>
<div class="a" style="left:6px;top:360px;width:14px;height:14px;background:transparent;border:2px solid #474747;border-radius:2px"></div>
<span class="t" style="left:24px;top:359.89px;font-size:11px;color:#4d4d4d;letter-spacing:-0.13px;">Full Screen</span>
<div class="a" style="left:6px;top:379px;width:130px;height:2px;background:#383838;"></div>
<span class="t" style="left:7px;top:384.69px;font-size:11px;color:#555;letter-spacing:-0.14px;">On (Spacebar) Stop:</span>
<div class="a" style="left:6px;top:404px;width:14px;height:14px;background:transparent;border:2px solid #474747;border-radius:2px"></div>
<span class="t" style="left:24px;top:403.49px;font-size:11px;color:#4d4d4d;letter-spacing:-0.14px;">If caching, play cached frames</span>
</div>
<!-- TIMELINE PANEL -->
<svg class="a" style="left:12px;top:485px;" width="6" height="6" viewBox="0 0 6 6"><path d="M0.5 0.5 L5.5 5.5 M5.5 0.5 L0.5 5.5" stroke="#b4b4b4" stroke-width="1"/></svg>
<div class="a" style="left:27px;top:481px;width:10px;height:10px;background:#c9a77c;"></div>
<span class="t" style="left:49px;top:479.89px;font-size:11.01px;color:#444;letter-spacing:-0.55px;">Comp 1</span>
<svg class="a" style="left:94px;top:484px;" width="9" height="8" viewBox="0 0 9 8"><path d="M0 0.5 H8 M0 3.5 H8 M0 6.5 H8" stroke="#4a4a4a" stroke-width="1"/></svg>
<span class="t" style="left:12px;top:504.60px;font-size:15px;color:#5b85e0;letter-spacing:1.1px;font-weight:bold;">0;00;00;00</span>
<span class="t" style="left:12px;top:519.66px;font-size:10.5px;color:#3b62b8;letter-spacing:-0.12px;">00000 (29.97 fps)</span>
<div class="a" style="left:107px;top:508px;width:226px;height:20px;background:#2a2a2a;border-radius:3px"></div>
<svg class="a" style="left:114px;top:512px;" width="18" height="14" viewBox="0 0 18 14"><circle cx="8" cy="5" r="4" fill="none" stroke="#484848" stroke-width="1.3"/><path d="M5 8 L1 12" stroke="#484848" stroke-width="1.5"/><path d="M11.5 8.5 L16 8.5 L13.75 11 Z" fill="#484848"/></svg>
<svg class="a" style="left:348px;top:511px;" width="18" height="14" viewBox="0 0 18 14"><rect x="0" y="2" width="4" height="3" fill="#c4c4c4"/><rect x="9" y="2.5" width="5" height="3" fill="#c4c4c4"/><rect x="9" y="7.5" width="5" height="3" fill="#c4c4c4"/><path d="M4 3.5 H9 M6.5 3.5 V9 H9" fill="none" stroke="#c4c4c4" stroke-width="1.1"/><path d="M12 12 L16 12 L14 14 Z" fill="#c4c4c4"/></svg>
<svg class="a" style="left:381px;top:509px;" width="18" height="17" viewBox="0 0 18 17"><path d="M5 0 V9 M0.5 4.5 H9.5 M1.8 1.3 L8.2 7.7 M8.2 1.3 L1.8 7.7" stroke="#c4c4c4" stroke-width="1.1"/><circle cx="5" cy="4.5" r="2" fill="#c4c4c4"/><path d="M8 9 L12.5 6.8 L17 9 V14 L12.5 16.5 L8 14 Z M8 9 L12.5 11.3 L17 9 M12.5 11.3 V16.5" fill="#232323" stroke="#c4c4c4" stroke-width="1.2"/></svg>
<svg class="a" style="left:415px;top:512px;" width="17" height="13" viewBox="0 0 17 13"><path d="M2 6.5 A6.5 6.5 0 0 1 15 6.5 Z" fill="#a8a8a8"/><rect x="0" y="7.5" width="17" height="5" fill="#a8a8a8"/><rect x="7.7" y="2" width="1.6" height="8" fill="#232323"/><circle cx="5" cy="5" r="1" fill="#232323"/><circle cx="12" cy="5" r="1" fill="#232323"/></svg>
<svg class="a" style="left:442px;top:511px;" width="15" height="14" viewBox="0 0 15 14"><rect x="3" y="0" width="12" height="11" fill="#a8a8a8"/><rect x="5.5" y="2.5" width="7" height="2.5" fill="#232323"/><rect x="5.5" y="6" width="7" height="2.5" fill="#232323"/><path d="M3.7 1 v1.2 M3.7 3.5 v1.2 M3.7 6 v1.2 M3.7 8.5 v1.2 M14.3 1 v1.2 M14.3 3.5 v1.2 M14.3 6 v1.2 M14.3 8.5 v1.2" stroke="#232323" stroke-width="0.8"/><path d="M1.5 3 V12.5 H11 M0 5 V14 H9" fill="none" stroke="#a8a8a8" stroke-width="1"/></svg>
<svg class="a" style="left:468px;top:511px;" width="15" height="14" viewBox="0 0 15 14"><ellipse cx="7" cy="10" rx="6" ry="3.5" fill="none" stroke="#a8a8a8" stroke-width="1"/><ellipse cx="8" cy="8" rx="6" ry="3.8" fill="#232323" stroke="#a8a8a8" stroke-width="1"/><ellipse cx="9" cy="5" rx="6" ry="4.5" fill="#a8a8a8"/></svg>
<svg class="a" style="left:502px;top:510px;" width="17" height="15" viewBox="0 0 17 15"><rect x="1" y="2" width="15" height="12.5" fill="none" stroke="#c4c4c4" stroke-width="1.3"/><path d="M3 4 C8 4 9 12 14 12.5" fill="none" stroke="#c4c4c4" stroke-width="1.2"/><path d="M4 0 V2 M8.5 0 V2 M13 0 V2" stroke="#c4c4c4" stroke-width="1.2"/></svg>
<div class="a" style="left:2px;top:536px;width:532px;height:1px;background:#111;"></div>
<div class="a" style="left:2px;top:537px;width:532px;height:18px;background:#2b2b2b;"></div>
<div class="a" style="left:2px;top:555px;width:532px;height:1px;background:#141414;"></div>
<svg class="a" style="left:7px;top:543px;" width="12" height="8" viewBox="0 0 12 8"><path d="M0 4 C3 -0.3 9 -0.3 12 4 C9 8.3 3 8.3 0 4 Z" fill="#bdbdbd"/><circle cx="6" cy="4" r="2.2" fill="#2b2b2b"/><circle cx="6" cy="4" r="0.9" fill="#888"/></svg>
<svg class="a" style="left:22px;top:541px;" width="12" height="11" viewBox="0 0 12 11"><path d="M0 3.5 H2.5 L6 0.5 V10.5 L2.5 7.5 H0 Z" fill="#bdbdbd"/><path d="M8 3 A3 3 0 0 1 8 8 M9.5 1 A5.5 5.5 0 0 1 9.5 10" fill="none" stroke="#bdbdbd" stroke-width="1.1"/></svg>
<svg class="a" style="left:39px;top:543px;" width="8" height="8" viewBox="0 0 8 8"><circle cx="4" cy="4" r="3.6" fill="#bdbdbd"/></svg>
<svg class="a" style="left:53px;top:541px;" width="10" height="11" viewBox="0 0 10 11"><path d="M2.2 5 V3.3 A2.8 2.8 0 0 1 7.8 3.3 V5" fill="none" stroke="#bdbdbd" stroke-width="1.5"/><rect x="0.5" y="5" width="9" height="6" fill="#bdbdbd"/><rect x="4.3" y="6.8" width="1.4" height="2.5" fill="#2b2b2b"/></svg>
<div class="a" style="left:69px;top:541px;width:1px;height:11px;background:#5a5a5a;"></div>
<div class="a" style="left:101px;top:541px;width:1px;height:11px;background:#5a5a5a;"></div>
<div class="a" style="left:134px;top:541px;width:1px;height:11px;background:#5a5a5a;"></div>
<div class="a" style="left:264px;top:541px;width:1px;height:11px;background:#5a5a5a;"></div>
<div class="a" style="left:400px;top:541px;width:1px;height:11px;background:#5a5a5a;"></div>
<div class="a" style="left:518px;top:541px;width:1px;height:11px;background:#5a5a5a;"></div>
<svg class="a" style="left:83px;top:541px;" width="13" height="12" viewBox="0 0 13 12"><path d="M0.5 1 L5.5 0.5 L12 7 L7 11.5 L0.8 5.8 Z" fill="#bdbdbd"/><circle cx="3.2" cy="3.2" r="1" fill="#2b2b2b"/></svg>
<span class="t" style="left:106.5px;top:539.74px;font-size:10px;color:#a8a8a8;">#</span>
<span class="t" style="left:121.5px;top:539.74px;font-size:10px;color:#5b85e0;">.</span>
<span class="t" style="left:140px;top:539.91px;font-size:9.5px;color:#a8a8a8;letter-spacing:-0.25px;">Source Name</span>
<svg class="a" style="left:270px;top:541px;" width="12" height="11" viewBox="0 0 12 11"><path d="M1.5 5 A4.5 4.5 0 0 1 10.5 5 Z" fill="none" stroke="#bdbdbd" stroke-width="1.2"/><path d="M0 6.2 H12 M6 1 V9.5 M3.5 9.8 H8.5" stroke="#bdbdbd" stroke-width="1.2"/></svg>
<svg class="a" style="left:286px;top:541px;" width="10" height="11" viewBox="0 0 10 11"><path d="M5 0 V11 M0 5.5 H10 M1.5 2 L8.5 9 M8.5 2 L1.5 9" stroke="#bdbdbd" stroke-width="1"/><circle cx="5" cy="5.5" r="2.2" fill="#bdbdbd"/><circle cx="5" cy="5.5" r="1" fill="#2b2b2b"/></svg>
<svg class="a" style="left:300px;top:541px;" width="11" height="11" viewBox="0 0 11 11"><path d="M0.5 0.5 L10.5 10.5" stroke="#bdbdbd" stroke-width="1.6" stroke-dasharray="2.5 1"/></svg>
<span class="t" style="left:314.5px;top:539.65px;font-size:14px;color:#bdbdbd;letter-spacing:-0.6px;font-family:"Liberation Serif",serif;"><i>fx</i></span>
<svg class="a" style="left:329px;top:541px;" width="13" height="11" viewBox="0 0 13 11"><rect x="2" y="0" width="11" height="9.5" fill="#bdbdbd"/><rect x="4.5" y="2" width="6" height="2.2" fill="#2b2b2b"/><rect x="4.5" y="5.3" width="6" height="2.2" fill="#2b2b2b"/><path d="M0.5 2 V11 H10" fill="none" stroke="#bdbdbd" stroke-width="1"/></svg>
<svg class="a" style="left:345px;top:540px;" width="13" height="13" viewBox="0 0 13 13"><ellipse cx="5.5" cy="9" rx="5" ry="3.3" fill="none" stroke="#bdbdbd" stroke-width="0.9"/><ellipse cx="6.3" cy="7.3" rx="5" ry="3.5" fill="#2b2b2b" stroke="#bdbdbd" stroke-width="0.9"/><ellipse cx="7.5" cy="4.5" rx="5" ry="4" fill="#8a8a8a" stroke="#bdbdbd" stroke-width="0.9"/></svg>
<svg class="a" style="left:360.5px;top:541px;" width="11" height="11" viewBox="0 0 11 11"><circle cx="5.5" cy="5.5" r="5" fill="#2b2b2b" stroke="#bdbdbd" stroke-width="1"/><path d="M9.1 1.9 A5 5 0 0 1 1.9 9.1 Z" fill="#bdbdbd"/></svg>
<svg class="a" style="left:375px;top:540px;" width="12" height="13" viewBox="0 0 12 13"><path d="M6 0.7 L11.3 3.5 V9.5 L6 12.3 L0.7 9.5 V3.5 Z M0.7 3.5 L6 6.3 L11.3 3.5 M6 6.3 V12.3" fill="none" stroke="#bdbdbd" stroke-width="1.1"/></svg>
<span class="t" style="left:407.5px;top:539.91px;font-size:9.5px;color:#a8a8a8;letter-spacing:-0.25px;">Parent &amp; Link</span>
<div class="a" style="left:2px;top:556px;width:532px;height:16px;background:#484848;"></div>
<div class="a" style="left:2px;top:572px;width:532px;height:1px;background:#1c1c1c;"></div>
<div class="a" style="left:6px;top:557px;width:13px;height:14px;background:#3a3a3a;"></div>
<svg class="a" style="left:7px;top:560px;" width="12" height="8" viewBox="0 0 12 8"><path d="M0 4 C3 -0.3 9 -0.3 12 4 C9 8.3 3 8.3 0 4 Z" fill="#dcdcdc"/><circle cx="6" cy="4" r="2.2" fill="#2e2e2e"/><circle cx="6" cy="4" r="0.9" fill="#777"/></svg>
<div class="a" style="left:36px;top:557px;width:13px;height:13px;background:#333;"></div>
<div class="a" style="left:51px;top:557px;width:13px;height:13px;background:#333;"></div>
<svg class="a" style="left:75px;top:560.5px;" width="7" height="8" viewBox="0 0 7 8"><path d="M0 0 H7 L3.5 7.5 Z" fill="#cfcfcf"/></svg>
<div class="a" style="left:87px;top:558px;width:12px;height:12px;background:#6382dc;"></div>
<span class="t" style="left:107.3px;top:556.79px;font-size:11px;color:#dcdcdc;">1</span>
<svg class="a" style="left:138px;top:559px;" width="12" height="11" viewBox="0 0 12 11"><path d="M6 0 L7.6 3.9 L12 4.1 L8.5 6.8 L9.7 10.8 L6 8.5 L2.3 10.8 L3.5 6.8 L0 4.1 L4.4 3.9 Z" fill="#d4d4d4"/></svg>
<div class="a" style="left:153px;top:556px;width:111px;height:16px;background:#464646;border:2px solid #a3a39b"></div>
<span class="t" style="left:157px;top:557.19px;font-size:11px;color:#e4e4e4;letter-spacing:-0.18000000000000005px;">Shape Layer 1</span>
<div class="a" style="left:269px;top:557px;width:13px;height:13px;background:#353535;"></div>
<div class="a" style="left:284px;top:557px;width:13px;height:13px;background:#353535;"></div>
<div class="a" style="left:299px;top:557px;width:13px;height:13px;background:#353535;"></div>
<svg class="a" style="left:270px;top:559px;" width="12" height="10" viewBox="0 0 12 10"><path d="M1.5 4.5 A4.5 4.5 0 0 1 10.5 4.5 Z" fill="none" stroke="#dcdcdc" stroke-width="1.1"/><path d="M0 5.7 H12 M6 0.8 V8.8 M3.5 9.2 H8.5" stroke="#dcdcdc" stroke-width="1.1"/></svg>
<svg class="a" style="left:286px;top:559px;" width="10" height="10" viewBox="0 0 10 10"><path d="M5 0 V10 M0 5 H10 M1.5 1.5 L8.5 8.5 M8.5 1.5 L1.5 8.5" stroke="#8a8a8a" stroke-width="0.9"/><circle cx="5" cy="5" r="1.8" fill="#8a8a8a"/></svg>
<svg class="a" style="left:301px;top:559px;" width="10" height="10" viewBox="0 0 10 10"><path d="M0.5 9.5 L9.5 0.5" stroke="#dcdcdc" stroke-width="1.3"/></svg>
<div class="a" style="left:344px;top:557px;width:13px;height:13px;background:#353535;"></div>
<div class="a" style="left:359px;top:557px;width:13px;height:13px;background:#353535;"></div>
<div class="a" style="left:374px;top:557px;width:13px;height:13px;background:#353535;"></div>
<svg class="a" style="left:406px;top:558px;" width="13" height="12" viewBox="0 0 13 12"><path d="M7 6 A1.5 1.5 0 1 0 5.5 7.5 A3.2 3.2 0 0 0 8.8 4.5 A4.2 4.2 0 0 0 1.5 4 A5.5 5.5 0 0 0 4 10.8 A6 6 0 0 0 11.5 8" fill="none" stroke="#d0d0d0" stroke-width="1.1"/></svg>
<div class="a" style="left:425px;top:557px;width:89px;height:14px;background:repeating-conic-gradient(#161616 0 25%,#222 0 50%) 0 0/2px 2px;background:repeating-conic-gradient(#1b1b1b 0 25%,#2a2a2a 0 50%) 0 0/2px 2px"></div>
<span class="t" style="left:432.5px;top:557.19px;font-size:11px;color:#dcdcdc;letter-spacing:-0.43000000000000005px;">None</span>
<svg class="a" style="left:502px;top:562px;" width="8" height="4" viewBox="0 0 8 4"><path d="M0.5 0.5 L4 3.5 L7.5 0.5" fill="none" stroke="#d0d0d0" stroke-width="1.2"/></svg>
<svg class="a" style="left:92px;top:578.5px;" width="8" height="7" viewBox="0 0 8 7"><path d="M0 0 H7.5 L3.75 6.5 Z" fill="#b4b4b4"/></svg>
<span class="t" style="left:109.3px;top:575.19px;font-size:11px;color:#b4b4b4;">Contents</span>
<span class="t" style="left:358.3px;top:575.09px;font-size:11px;color:#b4b4b4;">Add:</span>
<svg class="a" style="left:385px;top:575.5px;" width="11" height="11" viewBox="0 0 11 11"><circle cx="5.5" cy="5.5" r="5.5" fill="#d4d4d4"/><path d="M4 2.6 L8.4 5.5 L4 8.4 Z" fill="#232323"/></svg>
<div class="a" style="left:2px;top:590px;width:532px;height:17px;background:#262626;"></div>
<div class="a" style="left:5px;top:592px;width:16px;height:13px;background:repeating-conic-gradient(#161616 0 25%,#222 0 50%) 0 0/2px 2px;"></div>
<svg class="a" style="left:7px;top:594.5px;" width="12" height="8" viewBox="0 0 12 8"><path d="M0 4 C3 -0.3 9 -0.3 12 4 C9 8.3 3 8.3 0 4 Z" fill="#dcdcdc"/><circle cx="6" cy="4" r="2.2" fill="#2e2e2e"/><circle cx="6" cy="4" r="0.9" fill="#777"/></svg>
<svg class="a" style="left:109px;top:594.5px;" width="8" height="7" viewBox="0 0 8 7"><path d="M0 0 V6.5 L7.5 3.25 Z" fill="#b4b4b4"/></svg>
<span class="t" style="left:126.5px;top:591.89px;font-size:11px;color:#b4b4b4;letter-spacing:-0.28px;">Rectangle 1</span>
<div class="a" style="left:270px;top:591px;width:126.5px;height:14.5px;background:repeating-conic-gradient(#161616 0 25%,#222 0 50%) 0 0/2px 2px;border-radius:2px"></div>
<span class="t" style="left:277.4px;top:590.89px;font-size:11px;color:#d4d4d4;letter-spacing:0.21999999999999997px;">Normal</span>
<svg class="a" style="left:383.5px;top:596px;" width="8" height="4" viewBox="0 0 8 4"><path d="M0.5 0.5 L4 3.5 L7.5 0.5" fill="none" stroke="#b0b0b0" stroke-width="1.2"/></svg>
<svg class="a" style="left:92px;top:611.5px;" width="8" height="7" viewBox="0 0 8 7"><path d="M0 0 V6.5 L7.5 3.25 Z" fill="#b4b4b4"/></svg>
<span class="t" style="left:109.7px;top:609.19px;font-size:11px;color:#b4b4b4;letter-spacing:-0.030000000000000027px;">Transform</span>
<span class="t" style="left:270px;top:607.69px;font-size:11px;color:#5b85e0;letter-spacing:-0.28px;">Reset</span>
<div class="a" style="left:2px;top:685px;width:640px;height:1px;background:#101010;"></div>
<div class="a" style="left:6px;top:686px;width:15px;height:16px;background:#2e2e2e;"></div>
<svg class="a" style="left:8px;top:688.5px;" width="12" height="11" viewBox="0 0 12 11"><rect x="0.5" y="0.5" width="7" height="7" fill="none" stroke="#5b85e0" stroke-width="1.2"/><rect x="4" y="3.5" width="7.5" height="7" fill="#2e2e2e" stroke="#5b85e0" stroke-width="1.2"/><rect x="6.5" y="6" width="2.5" height="2.5" fill="#5b85e0"/></svg>
<svg class="a" style="left:26.5px;top:688.5px;" width="12" height="11" viewBox="0 0 12 11"><circle cx="4.5" cy="4.5" r="4" fill="none" stroke="#c4c4c4" stroke-width="1.2"/><rect x="5" y="4.5" width="6" height="6" fill="#232323" stroke="#c4c4c4" stroke-width="1.2"/></svg>
<svg class="a" style="left:44px;top:688.5px;" width="11" height="11" viewBox="0 0 11 11"><path d="M3 0 C1 0.5 3 4 0 5.5 C3 7 1 10.5 3 11 M8 0 C10 0.5 8 4 11 5.5 C8 7 10 10.5 8 11" fill="none" stroke="#c4c4c4" stroke-width="1.3"/><rect x="3.5" y="1" width="4" height="9" fill="#8a8a8a"/></svg>
<div class="a" style="left:267px;top:687px;width:133px;height:14px;background:repeating-conic-gradient(#161616 0 25%,#222 0 50%) 0 0/2px 2px;border-radius:2px"></div>
<span class="t" style="left:273px;top:687.19px;font-size:11px;color:#b4b4b4;letter-spacing:-0.030000000000000027px;">Toggle Switches / Modes</span>
<div class="a" style="left:534px;top:505px;width:1px;height:180px;background:#111;"></div>
<div class="a" style="left:535px;top:506px;width:813px;height:1px;background:#161616;"></div>
<div class="a" style="left:542px;top:507px;width:798px;height:8px;background:#6b6b6b;"></div>
<div class="a" style="left:535px;top:507px;width:7px;height:8px;background:#5b85e0;border-radius:5px 0 0 5px"></div>
<div class="a" style="left:1340px;top:507px;width:7px;height:8px;background:#5b85e0;border-radius:0 4px 4px 0"></div>
<div class="a" style="left:535px;top:515px;width:813px;height:21px;background:#1e1e1e;"></div>
<div class="a" style="left:543px;top:531px;width:1px;height:4px;background:#8c8c8c;"></div>
<span class="t" style="left:541px;top:517.03px;font-size:10px;color:#b0aca8;letter-spacing:-0.35px;">00s</span>
<div class="a" style="left:596px;top:531px;width:1px;height:4px;background:#8c8c8c;"></div>
<span class="t" style="left:586.95px;top:517.03px;font-size:10px;color:#b0aca8;letter-spacing:-0.35px;">02s</span>
<div class="a" style="left:649px;top:531px;width:1px;height:4px;background:#8c8c8c;"></div>
<span class="t" style="left:640.1px;top:517.03px;font-size:10px;color:#b0aca8;letter-spacing:-0.35px;">04s</span>
<div class="a" style="left:702px;top:531px;width:1px;height:4px;background:#8c8c8c;"></div>
<span class="t" style="left:693.25px;top:517.03px;font-size:10px;color:#b0aca8;letter-spacing:-0.35px;">06s</span>
<div class="a" style="left:755px;top:531px;width:1px;height:4px;background:#8c8c8c;"></div>
<span class="t" style="left:746.4000000000001px;top:517.03px;font-size:10px;color:#b0aca8;letter-spacing:-0.35px;">08s</span>
<div class="a" style="left:808px;top:531px;width:1px;height:4px;background:#8c8c8c;"></div>
<span class="t" style="left:799.5500000000001px;top:517.03px;font-size:10px;color:#b0aca8;letter-spacing:-0.35px;">10s</span>
<div class="a" style="left:862px;top:531px;width:1px;height:4px;background:#8c8c8c;"></div>
<span class="t" style="left:852.7px;top:517.03px;font-size:10px;color:#b0aca8;letter-spacing:-0.35px;">12s</span>
<div class="a" style="left:915px;top:531px;width:1px;height:4px;background:#8c8c8c;"></div>
<span class="t" style="left:905.8500000000001px;top:517.03px;font-size:10px;color:#b0aca8;letter-spacing:-0.35px;">14s</span>
<div class="a" style="left:968px;top:531px;width:1px;height:4px;background:#8c8c8c;"></div>
<span class="t" style="left:959.0px;top:517.03px;font-size:10px;color:#b0aca8;letter-spacing:-0.35px;">16s</span>
<div class="a" style="left:1021px;top:531px;width:1px;height:4px;background:#8c8c8c;"></div>
<span class="t" style="left:1012.1500000000001px;top:517.03px;font-size:10px;color:#b0aca8;letter-spacing:-0.35px;">18s</span>
<div class="a" style="left:1074px;top:531px;width:1px;height:4px;background:#8c8c8c;"></div>
<span class="t" style="left:1065.3px;top:517.03px;font-size:10px;color:#b0aca8;letter-spacing:-0.35px;">20s</span>
<div class="a" style="left:1127px;top:531px;width:1px;height:4px;background:#8c8c8c;"></div>
<span class="t" style="left:1118.45px;top:517.03px;font-size:10px;color:#b0aca8;letter-spacing:-0.35px;">22s</span>
<div class="a" style="left:1180px;top:531px;width:1px;height:4px;background:#8c8c8c;"></div>
<span class="t" style="left:1171.6000000000001px;top:517.03px;font-size:10px;color:#b0aca8;letter-spacing:-0.35px;">24s</span>
<div class="a" style="left:1234px;top:531px;width:1px;height:4px;background:#8c8c8c;"></div>
<span class="t" style="left:1224.75px;top:517.03px;font-size:10px;color:#b0aca8;letter-spacing:-0.35px;">26s</span>
<div class="a" style="left:1287px;top:531px;width:1px;height:4px;background:#8c8c8c;"></div>
<span class="t" style="left:1277.9px;top:517.03px;font-size:10px;color:#b0aca8;letter-spacing:-0.35px;">28s</span>
<div class="a" style="left:1340px;top:531px;width:1px;height:4px;background:#8c8c8c;"></div>
<span class="t" style="left:1331.25px;top:517.03px;font-size:10px;color:#b0aca8;letter-spacing:-0.35px;">30s</span>
<div class="a" style="left:535px;top:535px;width:813px;height:17px;background:#141414;"></div>
<div class="a" style="left:541px;top:537px;width:799px;height:14px;background:repeating-conic-gradient(#555 0 25%,#606060 0 50%) 0 0/2px 2px"></div>
<div class="a" style="left:536px;top:537px;width:6px;height:14px;background:#5b85e0;border-radius:4px 0 0 4px"></div>
<div class="a" style="left:1340px;top:537px;width:6px;height:14px;background:#5b85e0;border-radius:0 4px 4px 0"></div>
<div class="a" style="left:535px;top:552px;width:813px;height:3px;background:#1e1e1e;"></div>
<div class="a" style="left:535px;top:555px;width:7px;height:18px;background:#454545;"></div>
<div class="a" style="left:543px;top:556px;width:797px;height:16px;background:#5b78d0;background:linear-gradient(#8aa2ee 0,#6b88dc 1px,#5f7dd6 3px,#5a76cf 100%)"></div>
<div class="a" style="left:1340px;top:555px;width:7px;height:18px;background:#484848;"></div>
<div class="a" style="left:535px;top:573px;width:7px;height:111px;background:#2b2b2b;"></div>
<div class="a" style="left:542px;top:573px;width:798px;height:111px;background:#323232;"></div>
<div class="a" style="left:1340px;top:573px;width:7px;height:111px;background:#2c2c2c;"></div>
<div class="a" style="left:535px;top:589px;width:805px;height:1px;background:#282828;"></div>
<div class="a" style="left:535px;top:606px;width:805px;height:1px;background:#282828;"></div>
<div class="a" style="left:535px;top:623px;width:805px;height:1px;background:#282828;"></div>
<div class="a" style="left:535px;top:572px;width:812px;height:1px;background:#1e1e1e;"></div>
<div class="a" style="left:542px;top:527px;width:1px;height:158px;background:#5b85e0;"></div>
<svg class="a" style="left:536.5px;top:521px;" width="12" height="13" viewBox="0 0 12 13"><path d="M0 0 H12 V5.5 L6 13 L0 5.5 Z" fill="#5b85e0"/></svg>
<div class="a" style="left:539px;top:576px;width:3px;height:1px;background:#d0d0c8;"></div>
<div class="a" style="left:541px;top:576px;width:1px;height:11px;background:#d0d0c8;"></div>
<div class="a" style="left:539px;top:586px;width:3px;height:1px;background:#d0d0c8;"></div>
<div class="a" style="left:543px;top:576px;width:3px;height:1px;background:#d0d0c8;"></div>
<div class="a" style="left:543px;top:576px;width:1px;height:11px;background:#d0d0c8;"></div>
<div class="a" style="left:543px;top:586px;width:3px;height:1px;background:#d0d0c8;"></div>
<div class="a" style="left:539px;top:593px;width:3px;height:1px;background:#d0d0c8;"></div>
<div class="a" style="left:541px;top:593px;width:1px;height:11px;background:#d0d0c8;"></div>
<div class="a" style="left:539px;top:603px;width:3px;height:1px;background:#d0d0c8;"></div>
<div class="a" style="left:543px;top:593px;width:3px;height:1px;background:#d0d0c8;"></div>
<div class="a" style="left:543px;top:593px;width:1px;height:11px;background:#d0d0c8;"></div>
<div class="a" style="left:543px;top:603px;width:3px;height:1px;background:#d0d0c8;"></div>
<div class="a" style="left:539px;top:610px;width:3px;height:1px;background:#d0d0c8;"></div>
<div class="a" style="left:541px;top:610px;width:1px;height:11px;background:#d0d0c8;"></div>
<div class="a" style="left:539px;top:620px;width:3px;height:1px;background:#d0d0c8;"></div>
<div class="a" style="left:543px;top:610px;width:3px;height:1px;background:#d0d0c8;"></div>
<div class="a" style="left:543px;top:610px;width:1px;height:11px;background:#d0d0c8;"></div>
<div class="a" style="left:543px;top:620px;width:3px;height:1px;background:#d0d0c8;"></div>
<svg class="a" style="left:1351px;top:538px;" width="11" height="14" viewBox="0 0 11 14"><path d="M0 0 H11 V8.5 L5.5 14 L0 8.5 Z" fill="#b4b4b4"/></svg>
<div class="a" style="left:1347px;top:555px;width:17px;height:1px;background:#111;"></div>
<svg class="a" style="left:1348px;top:558px;" width="14" height="13" viewBox="0 0 14 13"><rect x="6" y="2" width="8" height="6" fill="#c4c4c4"/><path d="M6 1 L0.5 7.5 L6 8" fill="none" stroke="#c4c4c4" stroke-width="1"/><circle cx="6" cy="9" r="3" fill="#232323" stroke="#c4c4c4" stroke-width="1.2"/></svg>
<div class="a" style="left:1364px;top:473px;width:2px;height:229px;background:#1a1a1a;"></div>
<svg class="a" style="left:540px;top:690px;" width="10" height="6" viewBox="0 0 10 6"><path d="M0 5.5 L4 1 L6 3 L7 2 L9.5 5.5 Z" fill="#c4c4c4"/></svg>
<div class="a" style="left:571px;top:693px;width:38px;height:2px;background:#444;"></div>
<svg class="a" style="left:561px;top:690px;" width="10" height="10" viewBox="0 0 10 10"><circle cx="5" cy="5" r="3.8" fill="#232323" stroke="#b4b4b4" stroke-width="1.6"/></svg>
<svg class="a" style="left:620px;top:690px;" width="17" height="8" viewBox="0 0 17 8"><path d="M0 7.5 L6 0.5 L9 4 L11 1.5 L16.5 7.5 Z" fill="#c4c4c4"/></svg>
<span class="t" style="left:1055.5px;top:630.87px;font-size:20px;color:#888;letter-spacing:-0.05px;">Activate Windows</span>
<span class="t" style="left:1055.5px;top:653.00px;font-size:15px;color:#828282;letter-spacing:-0.1px;">Go to PC settings to activate Windows.</span>
<!-- FILL OPTIONS DIALOG -->
<div class="a" style="left:833px;top:148px;width:270px;height:205px;background:#f0b268;box-shadow:0 0 0 1px rgba(150,130,90,.3)"></div>
<div class="a" style="left:841px;top:179px;width:254px;height:166px;background:#232323;box-shadow:inset 1px -1px 0 #14181e"></div>
<div class="a" style="left:1065px;top:149px;width:31px;height:20px;background:#c8504c;"></div>
<svg class="a" style="left:1076px;top:154px;" width="10" height="10" viewBox="0 0 10 10"><path d="M1 1 L9 9 M9 1 L1 9" stroke="#fff" stroke-width="1.5"/></svg>
<span class="t" style="left:930.5px;top:156.50px;font-size:15px;color:#35261c;">Fill Options</span>
<div class="a" style="left:857px;top:194.5px;width:22px;height:21px;background:repeating-conic-gradient(#161616 0 25%,#222 0 50%) 0 0/2px 2px;border-radius:3px"></div>
<div class="a" style="left:881px;top:194.5px;width:22px;height:21px;background:repeating-conic-gradient(#161616 0 25%,#222 0 50%) 0 0/2px 2px;border-radius:3px"></div>
<div class="a" style="left:905px;top:194.5px;width:22px;height:21px;background:repeating-conic-gradient(#161616 0 25%,#222 0 50%) 0 0/2px 2px;border-radius:3px;background:#171717"></div>
<div class="a" style="left:929px;top:194.5px;width:22px;height:21px;background:repeating-conic-gradient(#161616 0 25%,#222 0 50%) 0 0/2px 2px;border-radius:3px"></div>
<div class="a" style="left:860px;top:199px;width:15px;height:11px;background:#fff;border:1px solid #ddd"></div>
<svg class="a" style="left:860px;top:199px;" width="15" height="11" viewBox="0 0 15 11"><path d="M0.5 10.5 L14.5 0.5" stroke="#e02020" stroke-width="1.3"/></svg>
<div class="a" style="left:884px;top:199px;width:15px;height:11px;background:#666;border:1px solid #b4b4b4"></div>
<div class="a" style="left:908px;top:199px;width:15px;height:11px;background:#666;background:linear-gradient(90deg,#2c2c2c,#8a8a8a);border:1px solid #5a84e8"></div>
<div class="a" style="left:932px;top:199px;width:15px;height:11px;background:#666;background:radial-gradient(circle,#b8b8b8 0%,#555 60%,#3a3a3a 100%);border:1px solid #b4b4b4"></div>
<span class="t" style="left:963.5px;top:197.39px;font-size:11px;color:#a4a4a4;">Linear Gradient</span>
<div class="a" style="left:857px;top:237px;width:109px;height:18px;background:repeating-conic-gradient(#161616 0 25%,#222 0 50%) 0 0/2px 2px;border-radius:3px"></div>
<span class="t" style="left:864.5px;top:238.99px;font-size:11px;color:#d4d4d4;letter-spacing:0.21999999999999997px;">Normal</span>
<svg class="a" style="left:953px;top:244.5px;" width="8" height="4" viewBox="0 0 8 4"><path d="M0.5 0.5 L4 3.5 L7.5 0.5" fill="none" stroke="#b0b0b0" stroke-width="1.2"/></svg>
<span class="t" style="left:977.5px;top:238.99px;font-size:11px;color:#9a9a9a;">Opacity:</span>
<span class="t" style="left:1025.5px;top:238.99px;font-size:11px;color:#4c8ce6;letter-spacing:-0.6300000000000001px;">100</span>
<span class="t" style="left:1046.5px;top:238.99px;font-size:11px;color:#9a9a9a;letter-spacing:0px;">%</span>
<div class="a" style="left:856px;top:276px;width:14px;height:14px;background:#8b8989;border-radius:2px"></div>
<svg class="a" style="left:858px;top:279px;" width="10" height="9" viewBox="0 0 10 9"><path d="M1 4.5 L3.8 7.5 L9 1" fill="none" stroke="#1c1c1c" stroke-width="1.8"/></svg>
<span class="t" style="left:874.5px;top:276.29px;font-size:11px;color:#9a9a9a;letter-spacing:0.06999999999999995px;">Preview</span>
<div class="a" style="left:890px;top:310px;width:90px;height:20px;background:transparent;border:1.5px solid #d4d4d4;border-radius:10px"></div>
<span class="t" style="left:926.5px;top:312.89px;font-size:11px;color:#f0f0f0;letter-spacing:-0.030000000000000027px;">OK</span>
<div class="a" style="left:990px;top:310px;width:90px;height:20px;background:transparent;border:1px solid #8a8a8a;border-radius:10px"></div>
<span class="t" style="left:1018px;top:312.89px;font-size:11px;color:#a6a6a6;letter-spacing:-0.33000000000000007px;">Cancel</span>
</body></html>
